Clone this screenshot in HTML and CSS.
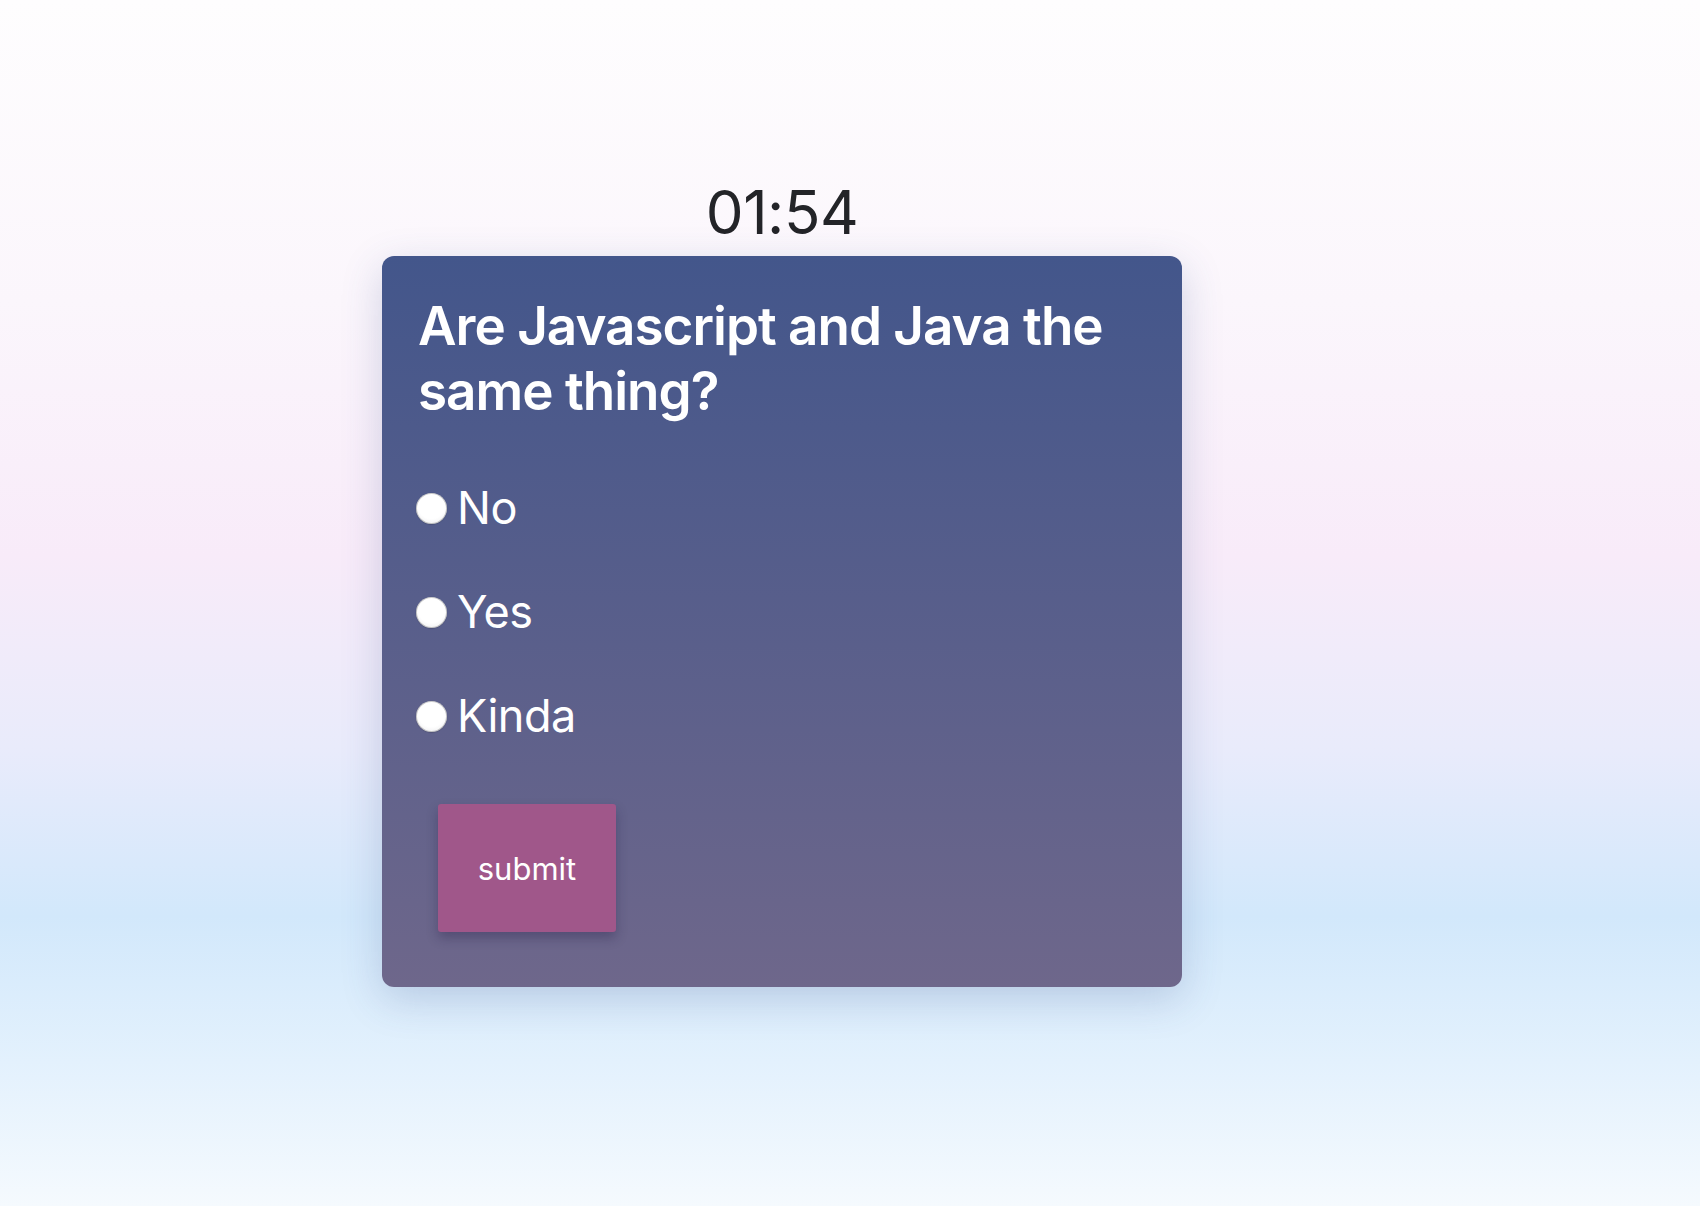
FILE: index.html
```html
<!DOCTYPE html>
<html lang="en">
<head>
<meta charset="utf-8">
<title>Quiz</title>
<link rel="stylesheet" href="styles.css">
</head>
<body>
<main class="page">
  <div class="timer">01:54</div>
  <form class="card">
    <h2 class="question">Are Javascript and Java the same thing?</h2>
    <ul class="options">
      <li class="option"><label class="option-label"><input class="radio" type="radio" name="answer" value="no"><span>No</span></label></li>
      <li class="option"><label class="option-label"><input class="radio" type="radio" name="answer" value="yes"><span>Yes</span></label></li>
      <li class="option"><label class="option-label"><input class="radio" type="radio" name="answer" value="kinda"><span>Kinda</span></label></li>
    </ul>
    <button class="submit" type="button">submit</button>
  </form>
</main>
</body>
</html>
```
FILE: styles.css
```css
* { box-sizing: border-box; }
html, body { margin: 0; padding: 0; }
body {
  font-family: Inter, "Noto Sans", "Liberation Sans", sans-serif;
  min-height: 100vh;
  background: linear-gradient(180deg, #fefdfe 0%, #fbf6fc 25%, #f8ebf9 46%, #e9ebfb 62%, #d2e8fb 76%, #e3f1fd 88%, #f5fafe 100%);
}
.page {
  min-height: 1206px;
  display: flex;
  flex-direction: column;
  align-items: center;
  padding-top: 176px;
  padding-right: 136px;
}
.timer {
  font-size: 60px;
  line-height: 72px;
  color: #232428;
  margin-bottom: 8px;
  letter-spacing: -0.5px;
}
.card {
  width: 800px;
  height: 731px;
  padding: 38px 36px 36px;
  border-radius: 12px;
  background: linear-gradient(180deg, #43568b 0%, #6e678b 100%);
  box-shadow: 0 12px 40px rgba(60, 80, 140, 0.22);
  color: #ffffff;
}
.question {
  margin: 0;
  font-size: 53px;
  line-height: 65px;
  font-weight: 600;
  letter-spacing: -1px;
}
.options {
  list-style: none;
  margin: 32px 0 0;
  padding: 0;
}
.option {
  height: 104px;
  display: flex;
  align-items: center;
}
.option-label {
  display: flex;
  align-items: center;
  gap: 10px;
  font-size: 45px;
  line-height: 54px;
  letter-spacing: -0.5px;
}
.radio {
  appearance: none;
  -webkit-appearance: none;
  margin: 0 0 0 -2px;
  width: 31px;
  height: 31px;
  border-radius: 50%;
  background: radial-gradient(circle at 50% 40%, #ffffff 55%, #e6e6e8 100%);
  box-shadow: inset 0 0 0 1px rgba(0, 0, 0, 0.2), 0 0.5px 1px rgba(0, 0, 0, 0.25);
}
.submit {
  margin: 36px 0 0 20px;
  width: 178px;
  height: 128px;
  border: none;
  border-radius: 3px;
  background: #a0578a;
  color: #ffffff;
  font-family: Inter, "Noto Sans", "Liberation Sans", sans-serif;
  font-size: 31px;
  letter-spacing: 0;
  box-shadow: 0 6px 12px rgba(30, 20, 60, 0.3);
}
```
